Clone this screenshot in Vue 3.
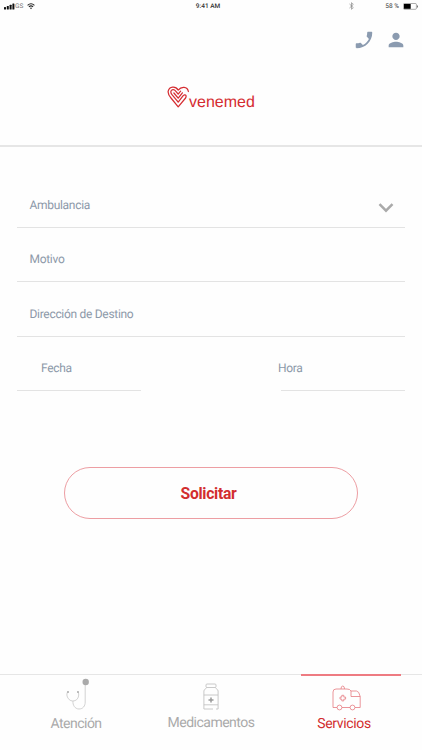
<script setup>
const fields = [
  { label: 'Ambulancia', select: true },
  { label: 'Motivo' },
  { label: 'Dirección de Destino' },
]
</script>

<template>
  <div class="screen">
    <header class="header">
      <div class="status">
        <div class="carrier">
          <svg width="11" height="7" viewBox="0 0 11 7" fill="#111"><rect x="0" y="4" width="2" height="2.5" rx=".5" /><rect x="2.8" y="3" width="2" height="3.5" rx=".5" /><rect x="5.6" y="1.8" width="2" height="4.7" rx=".5" /><rect x="8.4" y=".5" width="2" height="6" rx=".5" /></svg>
          <span class="network">GS</span>
          <svg class="wifi" width="8" height="7" viewBox="0 0 8 7" fill="none" stroke="#222" stroke-width="1.1"><path d="M.6 2.3Q4-.8 7.4 2.3M1.9 3.8Q4 2 6.1 3.8" /><path d="M3 4.9L4 6.2 5 4.9Q4 4.2 3 4.9Z" fill="#222" stroke="none" /></svg>
        </div>
        <span class="time">9:41 AM</span>
        <div class="power">
          <svg class="bluetooth" width="5" height="8" viewBox="0 0 5 8" fill="none" stroke="#888" stroke-width=".7"><path d="M.5 2L4.3 5.6 2.5 7.3V.7L4.3 2.4.5 6" /></svg>
          <span>58 %</span>
          <svg class="battery" width="16" height="7" viewBox="0 0 16 7"><rect x=".4" y=".5" width="13" height="5.8" rx="1" fill="#fff" stroke="#777" stroke-width=".6" /><rect x="1" y="1" width="6.7" height="4.8" fill="#000" /><path d="M14.5 2.5v2" stroke="#777" /></svg>
        </div>
      </div>
      <div class="actions">
        <svg width="22" height="22" viewBox="0 0 24 24" fill="#8b9bb0"><path transform="translate(24 0) scale(-1 1)" d="M6.62 10.79c1.44 2.83 3.76 5.14 6.59 6.59l2.2-2.2c.27-.27.67-.36 1.02-.24 1.12.37 2.33.57 3.57.57.55 0 1 .45 1 1V20c0 .55-.45 1-1 1-9.39 0-17-7.61-17-17 0-.55.45-1 1-1h3.5c.55 0 1 .45 1 1 0 1.25.2 2.45.57 3.57.11.35.03.74-.25 1.02l-2.2 2.2z" /></svg>
        <svg width="22" height="22" viewBox="0 0 24 24" fill="#8b9bb0"><path d="M12 12c2.21 0 4-1.79 4-4s-1.79-4-4-4-4 1.79-4 4 1.79 4 4 4zm0 2c-2.67 0-8 1.34-8 4v2h16v-2c0-2.66-5.33-4-8-4z" /></svg>
      </div>
      <div class="logo">
        <svg width="23" height="23" viewBox="0 0 23 23" fill="none" stroke="#d52c31" stroke-width="1.25" stroke-linecap="round" stroke-linejoin="round">
          <path d="M21.4 5.5C20.4.2 14.2.2 11.2 4.1 8.5-.2 2.4.4 1.2 5.2.7 8 2.2 10 4 12L11.2 20.8 18.6 12C20 9.3 17.8 7.6 16.2 9.7L11.2 16.2 4.8 8.4C3.3 6.4 3.7 4.5 5.2 3.8 6.5 3.3 7.8 3.9 8.7 5.1L11.2 8.1 13.6 5.2" />
          <path d="M6.9 7L11.2 12.2 15.4 6.8" />
        </svg>
        <span class="wordmark">venemed</span>
      </div>
    </header>

    <main class="form">
      <div v-for="field in fields" :key="field.label" class="field">
        <span>{{ field.label }}</span>
        <svg v-if="field.select" class="chevron" width="16" height="10" viewBox="0 0 16 10" fill="none" stroke="#aaa" stroke-width="2.5"><path d="M1.5 1.2L8 7.7 14.5 1.2" /></svg>
      </div>
      <div class="split">
        <div class="field date">Fecha</div>
        <div class="field hour"><span>Hora</span></div>
      </div>
      <button class="submit">Solicitar</button>
    </main>

    <nav class="tabs">
      <a class="tab attention">
        <svg width="24" height="36" viewBox="0 0 24 36" fill="none" stroke="#c6c6c6" stroke-width=".8"><path d="M2.8 15H1.5Q.5 17 1 19C2 22 4 24 6.8 24 10 24 12 22 12.6 19Q13 17 12.2 15H11M7 24C6.5 28 9 32 13 32 17 32 19.2 29 19.2 25V8" /><g fill="#aaa" stroke="none"><circle cx="2" cy="15" r=".9" /><circle cx="12" cy="15" r=".9" /><circle cx="19.7" cy="5" r="3.2" /></g></svg>
        <span>Atención</span>
      </a>
      <a class="tab medicine">
        <svg width="16" height="28" viewBox="0 0 16 28" fill="none" stroke="#bdbdbd" stroke-width=".8"><rect x="3" y="1" width="10" height="3.5" rx="1" /><path d="M3.5 4.5C3.5 6 .9 6 .9 8V26H10M12.5 4.5C12.5 6 15.1 6 15.1 8V26H13M.9 12H15M.9 21.8H15" /><path d="M8 14.4v5M5.5 16.9h5" stroke="#999" stroke-width="1.5" /></svg>
        <span>Medicamentos</span>
      </a>
      <a class="tab services">
        <svg width="30" height="26" viewBox="0 0 30 26" fill="none" stroke="#e67b82" stroke-width=".8"><path d="M5 22.5H1V7Q1 4 4 4H15Q18 4 19 6V11.5H28.2M10 22.5H18M23 22.5H28.2V11.5Q27 6 24.5 6H19M9 4Q9 1 10.8 1 12.5 1 12.5 4" /><circle cx="7.5" cy="22.5" r="2.4" /><circle cx="20.5" cy="22.5" r="2.4" /><path d="M9.8 10.3h2v1.8h1.8v2h-1.8v1.8h-2v-1.8H8v-2h1.8z" /></svg>
        <span>Servicios</span>
      </a>
    </nav>
  </div>
</template>

<style>
body { background: #fefefe; }
</style>

<style scoped>
* { box-sizing: border-box; }
svg { display: block; flex-shrink: 0; }
.screen { width: 422px; height: 750px; display: flex; flex-direction: column; overflow: hidden; background: #fefefe; font-family: Roboto, sans-serif; color: #8d99a9; text-rendering: geometricPrecision; }
.header { height: 147px; flex-shrink: 0; border-bottom: 2px solid #e6e6e6; }
.status { height: 12px; padding: 0 4px; display: grid; grid-template-columns: 1fr auto 1fr; align-items: center; font-size: 6.5px; line-height: 12px; color: #333; }
.carrier { display: flex; align-items: center; }
.network { width: 12px; color: #777; }
.time { margin-left: -6px; font-weight: 500; font-size: 6.5px; }
.power { display: flex; align-items: center; justify-content: flex-end; }
.bluetooth { margin-right: 31px; }
.battery { margin-left: 4px; margin-right: -1px; }
.actions { height: 57px; padding: 17px 15px 0; display: flex; justify-content: flex-end; gap: 10px; }
.logo { padding: 17px 0 0 167px; display: flex; }
.wordmark { margin: 7px 0 0 -1px; font: 16px/20px "Liberation Sans", sans-serif; color: #d52c31; }
.form { height: 527px; flex-shrink: 0; padding: 26.5px 17px 0; display: flex; flex-direction: column; font-size: 12px; letter-spacing: -.3px; }
.field { height: 54.4px; flex-shrink: 0; padding: 22.5px 11.5px 0 12.5px; display: flex; justify-content: space-between; border-bottom: 1px solid #e3e3e3; line-height: 18px; }
.chevron { margin-top: 7px; }
.split { display: flex; justify-content: space-between; }
.date { width: 124px; padding-left: 24px; }
.hour { width: 124px; padding-left: 0; }
.hour span { margin-left: -3px; }
.submit { width: 294px; height: 52px; flex-shrink: 0; margin: 75.5px 0 0 47px; padding: 1px 5px 0 0; border: 1px solid #ed9ea3; border-radius: 26px; background: #fefefe; color: #d22e2f; font: 700 15.7px/49px Roboto, sans-serif; letter-spacing: -.3px; }
.tabs { height: 76px; padding: 0 21px; display: grid; grid-template-columns: 110px 160px 100px; border-top: 1px solid #e6e6e6; font-size: 14px; letter-spacing: -.5px; color: #aaa; }
.tab { display: flex; flex-direction: column; align-items: center; margin-top: -1px; line-height: 18px; }
.attention svg { margin-top: 3px; margin-left: 4px; }
.attention span { margin-top: 2px; }
.medicine svg { margin-top: 9px; }
.medicine span { margin-top: 3px; }
.services { margin-left: 9.5px; margin-right: -9.5px; border-top: 2px solid #ee7b82; color: #d22e2f; letter-spacing: -.35px; }
.services svg { margin-top: 9px; margin-left: -7px; }
.services span { margin-top: 4px; margin-left: -13px; }
</style>
